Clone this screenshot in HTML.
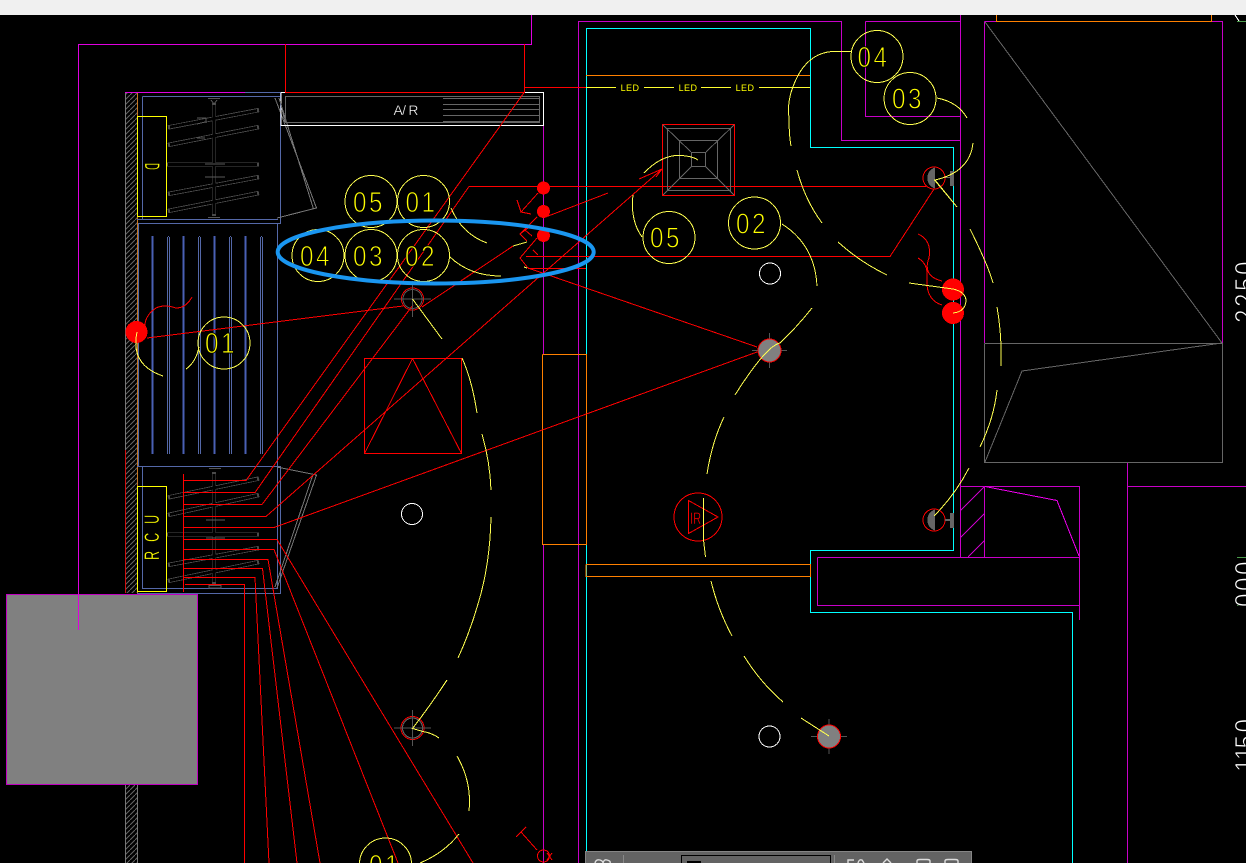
<!DOCTYPE html>
<html><head><meta charset="utf-8"><title>CAD</title>
<style>
html,body{margin:0;padding:0;background:#000;width:1246px;height:863px;overflow:hidden}
svg{display:block;position:absolute;left:0;top:0}
.n{font:28.6px "Liberation Sans",sans-serif;fill:#ff0;stroke:#000;stroke-width:.9px;text-anchor:middle;letter-spacing:2.9px}
.w{font:28.6px "Liberation Sans",sans-serif;fill:#fff;stroke:#000;stroke-width:.9px;letter-spacing:2.9px}
.l{font:9px "Liberation Sans",sans-serif;fill:#ff0;text-anchor:middle;letter-spacing:.4px}
.c{font:21px "Liberation Sans",sans-serif;fill:#ff0;stroke:#000;stroke-width:.3px}
</style></head><body>
<svg width="1246" height="863" viewBox="0 0 1246 863" xmlns="http://www.w3.org/2000/svg">
<defs>
<pattern id="h" width="5" height="5" patternUnits="userSpaceOnUse"><path d="M-1 6L6 -1" stroke="#666" stroke-width="1" fill="none"/></pattern>
</defs>
<rect width="1246" height="863" fill="#000"/>
<rect width="1246" height="15" fill="#f0f0f0"/>

<g fill="none" shape-rendering="crispEdges" stroke-width="1">
<!-- hatch wall -->
<rect x="126" y="93" width="11" height="500" fill="url(#h)"/>
<rect x="126" y="785" width="11" height="78" fill="url(#h)"/>
<path d="M137.5 93V593" stroke="#c87820"/>
<path d="M125.5 450V593" stroke="#d01010"/>
<path d="M125.5 93V450M125.5 785V863M137.5 785V863" stroke="#777"/>

<!-- magenta -->
<path stroke="#e000e0" d="M78.5 630V44.5H531.5V15M125 92.5H245"/>
<path stroke="#c800c8" d="M543.5 125V354M543.5 545V863M578.5 863V21.5H841.5V140.5H960.5M865.5 21.5H960.5M865.5 21.5V116.5H960.5M960.5 15V557.5M960.5 486.5H1079.5V620M817.5 557.5H1079.5M817.5 557.5V605.5H1079.5M984.5 486.5V557.5M1127.5 462V863M1127.5 486.5H1246M984.5 21.5H996M1211 21.5H1222.5V343M984.5 21.5V343"/>
<path stroke="#f000f0" d="M985 486.5L1057 500.5L1079 556"/>
<path stroke="#c800c8" d="M960 511L984 487M960 538L984 514M968 557L984 541"/>

<!-- cyan -->
<path stroke="#00ffff" d="M586.5 863V28.5H810.5V147.5H953.5V550.5H810.5V612.5H1072.5V863"/>

<!-- orange -->
<path stroke="#ff8000" d="M996.5 15V21.5H1211.5V15M586 75.5H810M542.5 354.5H586.5V544.5H542.5V354.5M586 564.5H810.5V576.5H586V564.5"/>

<!-- grey right block -->
<path stroke="#666" d="M984.5 343.5H1222.5V462.5H984.5V343.5M985 22L1222 343M1222 343L1022 371L985 462"/>

<!-- blue panels -->
<g stroke="#5468a8">
<path d="M245 92.5H280.5V223.5H138M142.5 96.5H280M142.5 96.5V219M137 219.5H278M138.5 224V466M277.5 224V466M137 466.5H280.5V593.5H137M142.5 467V588.5H278M277.5 467V588"/>
<path d="M167.5 237V454M198.5 237V454M229.5 237V454M260.5 237V454M169.5 237V454M200.5 237V454M231.5 237V454M262.5 237V454M168 236.5H169M199 236.5H200M230 236.5H231M261 236.5H262"/>
<path d="M152 450V454M167.5 450V454"/>
</g>
<g stroke="#4a60b4" stroke-width="2">
<path d="M152.5 236V454M183.5 236V454M214.5 236V454M245.5 236V454"/>
</g>

<!-- hangers -->
<g stroke="#4a4a4a" stroke-width="4.4"><path d="M168 127.5L259 110M168 145L259 127M166 164.5H259M168 194L259 177M168 211L259 193M168 497.5L259 478.5M168 515L259 495M166 534.5H259M168 565L259 548M168 581L259 562"/><path d="M214 103V216M214 472V584"/></g>
<g stroke="#000" stroke-width="2.8"><path d="M170 127L257 110.5M170 144.6L257 127.4M168 164.5H257M170 193.6L257 177.4M170 210.6L257 193.4M170 497L257 479M170 514.6L257 495.4M168 534.5H257M170 564.6L257 548.4M170 580.6L257 562.4"/><path d="M214 105V214M214 474V582"/></g>
<path stroke="#555" d="M208 98.5H220M211 100L214 104L217 100M208 217.5H220M209 468.5H221M209 585.5H221V588H209Z"/>
<path stroke="#5a5a5a" d="M197 118H206V123M197 124L205 122M197 138H205M205 164H225M205 177H225M206 520H225M206 538H225"/>
<!-- door lines -->
<path stroke="#777" d="M275 98L316.5 208L277 218M279 98L313.5 209M277 467L316.5 475L277 588M312.5 476L275 587"/>

<!-- yellow boxes -->
<path stroke="#ff0" d="M137.5 116.5H166.5V216.5H137.5ZM137.5 486.5H166.5V591.5H137.5Z"/>

<!-- A/R -->
<path stroke="#666" d="M285.5 96.5H539.5V122.5H285.5ZM443 98.5H539M443 104.5H539M443 109.5H539M443 115.5H539M443 121.5H539"/>
<path stroke="#fff" d="M281 92.5H543.5V125.5H281V92.5"/>
<path stroke="#777" d="M280 100L285 122"/>

<!-- red wiring -->
<g stroke="#ff0000">
<path d="M285.5 44V92.5H524.5V44M525 87.5H586M524.5 92L246 480.5H183.5M183.5 474V592M469 186.5L255 492.5H183.5M469 186.5H926M262 504.5L413 305M262 504.5H183.5M266 516.5H183.5M266 516.5L662 169M639 179L662 169L656 177M183.5 527.5H274L757 352M183.5 539.5H277L473 863M183.5 549.5H274L398 863M183.5 559.5H268L320 863M183.5 568.5H262.5L297 863M183.5 577.5H255L269 863M185 584.5H244.5V863"/>
<path d="M147 338L403 306M422 307L513 246M526 256.5H890L934 189M528 268.5H586M528 268L757 347M538 193L521 212L517 200M521 212L531 214M543 218L608 193M537 217L520 234L527 241M525 230L532 236M520 234L528 228M537 238L520 258L528 268M533 250L538 255"/>
<path d="M192 297Q186 308 176 308Q164 304 156 308Q144 316 145 328"/>
<path d="M918 234Q932 240 929 258Q922 276 942 281M918 258Q928 264 927 276Q925 300 942 305"/>
<!-- box -->
<path d="M364.5 358.5H461.5V453.5H364.5ZM364.5 453.5L412.5 358.5L461.5 453.5"/>
<!-- pyramid -->
<path d="M662.5 124.5H734.5V195.5H662.5Z"/>
<!-- bottom symbol -->
<path d="M537 850L521 832M516 837L526 827M547 853L552 860M552 853L547 860"/>
<!-- IR -->
<path d="M688.5 500.5V533.5L718 517Z"/>
</g>
<circle cx="543.5" cy="856" r="6" stroke="#f00"/>
<circle cx="698" cy="517" r="24" stroke="#f00"/>

<!-- pyramid grey -->
<path stroke="#666" d="M667.5 128.5H730.5V190.5H667.5ZM679.5 140.5H717.5V178.5H679.5ZM691.5 152.5H705.5V166.5H691.5ZM663 125L691 152M734 125L706 152M663 195L691 167M734 195L706 167"/>

<!-- yellow line LED -->
<path stroke="#ffff30" d="M586 87.5H616M644 87.5H674M701 87.5H731M759 87.5H810"/>

<!-- fixtures -->
<circle cx="412.5" cy="299" r="11" stroke="#f00"/><circle cx="412.5" cy="299" r="9.5" stroke="#555"/>
<path stroke="#555" d="M394 299H431M412.5 281V317"/>
<circle cx="412.5" cy="728" r="11.5" stroke="#f00"/><circle cx="412.5" cy="728" r="10" stroke="#666"/>
<path stroke="#555" d="M394 728H431M412.5 710V746"/>
<path stroke="#555" d="M752 350.5H787M769.5 333V368M811 736.5H847M829 719V754"/>
<circle cx="769.5" cy="350.5" r="11.5" fill="#808080" stroke="#f00"/>
<circle cx="829" cy="736.5" r="11.5" fill="#808080" stroke="#f00"/>
<path d="M935 167.5A11 11 0 0 0 935 188.5Z" fill="#666"/>
<path d="M935 509.5A11 11 0 0 0 935 530.5Z" fill="#666"/>
<circle cx="934" cy="178" r="11" stroke="#f00"/>
<circle cx="934" cy="520" r="11" stroke="#f00"/>
<path fill="#666" stroke="none" d="M950 171H954V186H950ZM945 177H950V178H945ZM950 513H954V528H950ZM945 519H950V521H945Z"/>

<!-- red dots -->
<g fill="#f00" stroke="none">
<circle cx="136.5" cy="332" r="11"/><circle cx="953" cy="289.5" r="11"/><circle cx="953" cy="313" r="11"/>
<circle cx="543.5" cy="188" r="6.5"/><circle cx="543.5" cy="211.5" r="6.5"/><circle cx="543.5" cy="235.5" r="6.5"/>
</g>

<!-- white circles -->
<g stroke="#fff"><circle cx="770" cy="273.5" r="10.5"/><circle cx="412" cy="514" r="10.5"/><circle cx="769.5" cy="736.5" r="10.5"/></g>

<!-- yellow arcs -->
<g stroke="#ffff50">
<path d="M451 208Q462 234 487 243M450 257Q470 276 501 276M513 246L527 242M524 267L527 268M412.5 299L442 339M199 347Q196 362 186 369M137 332Q130 365 163 376"/>
<path d="M462 358Q472 380 477 413M482 434Q490 462 491 490M491 517Q490 565 478 604M478 604Q470 632 458 658M447 680Q430 706 412.5 728.5L423 731.5Q432 733 439 738M457 756Q472 782 469 811M459 834Q444 853 420 863"/>
<path d="M851 51.5H832Q812 53 800 72Q786 96 789 118Q789 135 791 146M797 170Q805 200 822 223M838 242Q860 262 887 275M937 98Q958 102 967 118M973 143Q970 172 935 180L957 207M642 237Q630 220 633 195M644 173Q664 152 686 156Q694 157 698 160M782 224Q815 245 817 286M909 283L953 289Q966 292 966 301Q965 312 953 313M970 229Q988 265 993 283M997 307Q1002 335 1001 366M997 390Q994 418 980 447M969 468Q955 495 934 516"/>
<path d="M812 308Q796 328 780 343Q766 346 735 395M724 417Q712 442 707 474M703.5 498V540L705.5 557M711 581Q718 610 732 636M744 656Q760 682 783 702M801 718L829 736M934.5 180L957 207"/>
<circle cx="371" cy="201.5" r="26"/><circle cx="423.5" cy="201.5" r="26"/><circle cx="318" cy="255.5" r="26"/><circle cx="371" cy="255.5" r="26"/><circle cx="423.5" cy="255.5" r="26"/><circle cx="224" cy="343" r="26"/>
<circle cx="877" cy="56.5" r="26"/><circle cx="910" cy="98.5" r="26"/><circle cx="669" cy="237.5" r="26"/><circle cx="754.5" cy="223" r="26"/><circle cx="385.5" cy="864" r="26"/>
</g>

<!-- block -->
<rect x="6.5" y="594.5" width="191" height="190" fill="#808080" stroke="#c000c0"/>
<path stroke="#e000e0" d="M78.5 594V630"/>
<path stroke="#4a9a4a" d="M1237 21.5H1246M1237 557.5H1246M1237 605.5H1246"/>
<path stroke="#fff" d="M1235 15L1239 21"/>
</g>

<!-- text -->
<g>
<text class="n" transform="translate(369,212) scale(.85,1)">05</text>
<text class="n" transform="translate(421.5,212) scale(.85,1)">01</text>
<text class="n" transform="translate(316,266) scale(.85,1)">04</text>
<text class="n" transform="translate(369,266) scale(.85,1)">03</text>
<text class="n" transform="translate(421,266) scale(.85,1)">02</text>
<text class="n" transform="translate(221,353) scale(.85,1)">01</text>
<text class="n" transform="translate(873.5,67) scale(.85,1)">04</text>
<text class="n" transform="translate(908,108.5) scale(.85,1)">03</text>
<text class="n" transform="translate(666,247.5) scale(.85,1)">05</text>
<text class="n" transform="translate(752,233.5) scale(.85,1)">02</text>
<text class="n" transform="translate(385,875) scale(.85,1)">01</text>
<text x="393.5" y="115" style="font:14px 'Liberation Sans',sans-serif;fill:#fff" stroke="#000" stroke-width=".3" textLength="25">A/ R</text>
<text class="l" x="630" y="91">LED</text><text class="l" x="688" y="91">LED</text><text class="l" x="745" y="91">LED</text>
<text class="c" transform="translate(159,560) rotate(-90) scale(.6,1)" letter-spacing="15">RCU</text>
<text class="c" transform="translate(145,163) rotate(90) scale(.45,1)">D</text>
<text transform="translate(690,524) scale(.65,1)" style="font:17px 'Liberation Sans',sans-serif;fill:#f00" stroke="#000" stroke-width=".4">IR</text>
<text class="w" transform="translate(1255,323) rotate(-90) scale(.85,1)">2250</text>
<text class="w" transform="translate(1255,607) rotate(-90) scale(.85,1)">000</text>
<text class="w" transform="translate(1255,772) rotate(-90) scale(.85,1)">1<tspan dx="-5">1</tspan><tspan dx="-5">5</tspan>0</text>
</g>

<!-- blue ellipse -->
<ellipse cx="435.7" cy="252" rx="158" ry="31.5" fill="none" stroke="#1a96f0" stroke-width="4"/>

<!-- toolbar -->
<g shape-rendering="crispEdges">
<rect x="585" y="851" width="387" height="12" fill="#636363"/>
<path d="M585.5 863V851.5H971.5V863" fill="none" stroke="#858585"/>
<path d="M681.5 863V855.5H830.5V863" fill="none" stroke="#000"/>
<rect x="687" y="861" width="14" height="2" fill="#000"/>
<path d="M623.5 855V863M834.5 855V863" stroke="#888"/>
</g>
<g fill="none" stroke="#ddd" stroke-width="1.4">
<path d="M595 863Q596 859 600 860Q603 861 603 863M603 863Q604 859 607 860Q611 861 610 863"/>
<path d="M848 863V860H854M858 863Q859 859 862 860L864 863"/>
<path d="M883 863L887 859L891 863M917 863V861Q917 859.5 920 859.5H927Q930 859.5 930 861V863M945 863V861Q945 859.5 948 859.5H955Q958 859.5 958 861V863"/>
</g>
</svg>
</body></html>
